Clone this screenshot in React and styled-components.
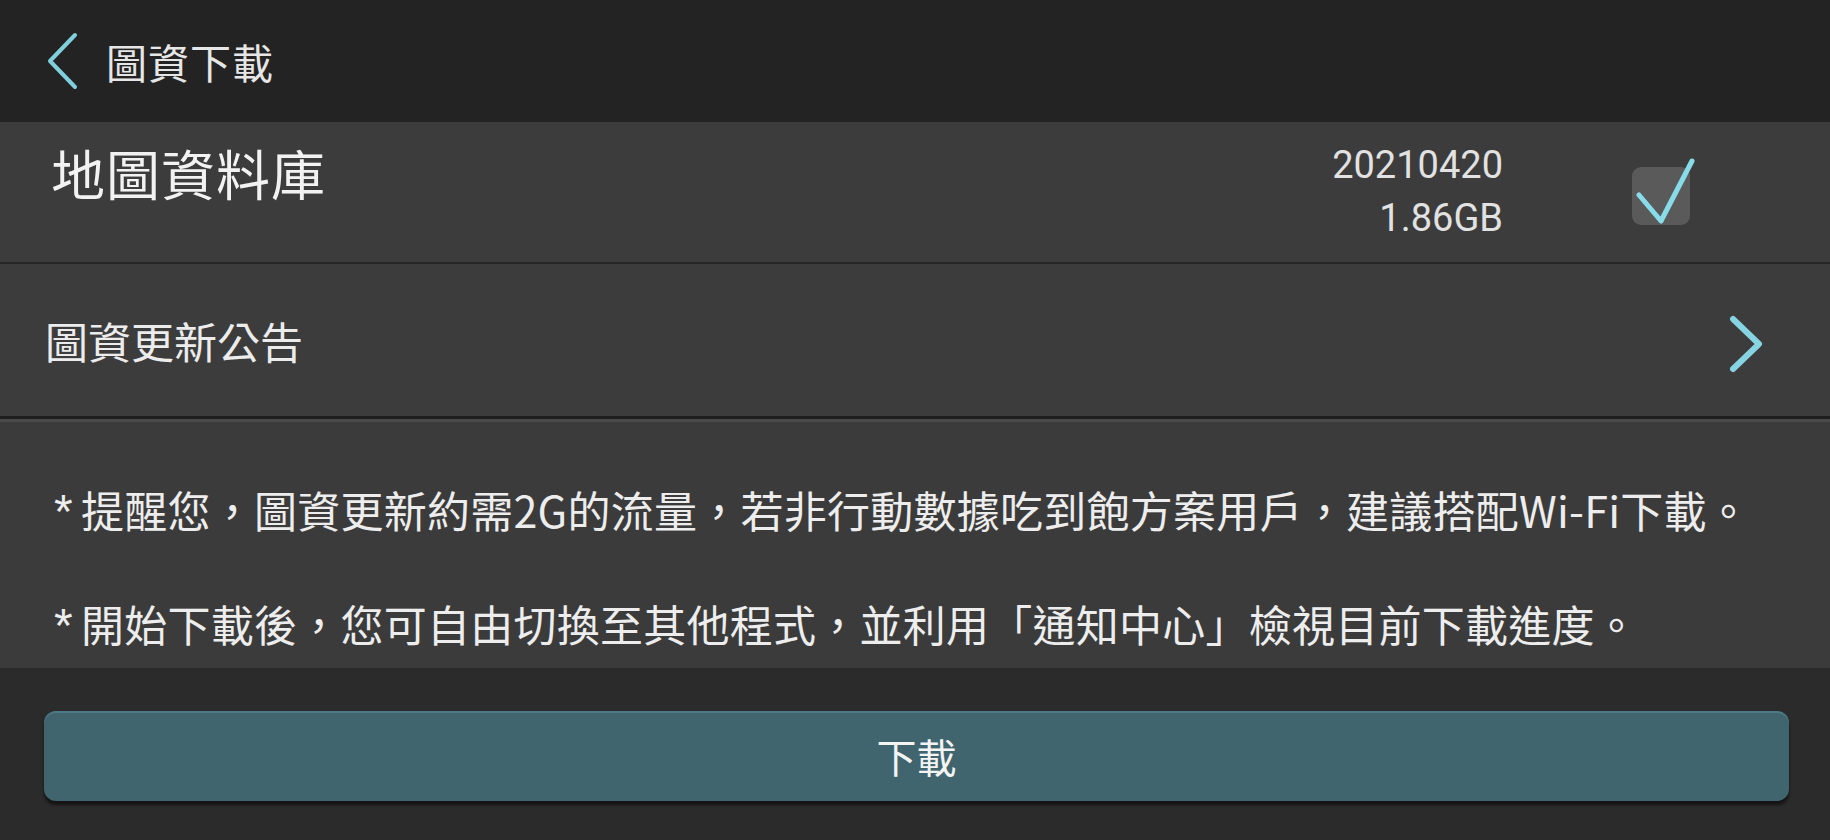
import React from 'react'
import styled, { createGlobalStyle } from 'styled-components'

const GlobalStyle = createGlobalStyle`
  html, body {
    margin: 0;
    padding: 0;
    background: #2b2b2b;
  }
  body {
    font-family: "Noto Sans CJK TC", "Noto Sans", sans-serif;
    color: #ececec;
  }
`

const Screen = styled.div`
  width: 1830px;
  height: 840px;
  display: flex;
  flex-direction: column;
  background: #2b2b2b;
  overflow: hidden;
`

const TopBar = styled.header`
  height: 122px;
  flex: none;
  display: flex;
  align-items: center;
  gap: 26px;
  padding-left: 46px;
  background: #232323;
  box-sizing: border-box;
`

const BackButton = styled.button`
  border: none;
  background: none;
  padding: 0;
  display: flex;
  cursor: pointer;
`

const TopTitle = styled.h1`
  margin: 0;
  font-size: 41px;
  font-weight: 400;
  color: #e6e6e6;
  letter-spacing: 1px;
`

const Row = styled.div`
  height: ${p => p.$height}px;
  flex: none;
  display: flex;
  align-items: center;
  padding: 0 ${p => p.$right || 66}px 0 ${p => p.$left || 47}px;
  background: #3c3c3c;
  box-sizing: border-box;
  border-bottom: ${p => p.$divider || '2px solid #262626'};
`

const DbTitle = styled.div`
  flex: 1;
  font-size: 54px;
  line-height: 60px;
  margin-bottom: 38px;
  color: #f2f2f2;
  letter-spacing: 1px;
`

const Meta = styled.div`
  display: flex;
  flex-direction: column;
  align-items: flex-end;
  font-family: Roboto, "Noto Sans", sans-serif;
  font-size: 38px;
  line-height: 53px;
  color: #e2e2e2;
  margin-right: 129px;
`

const CheckBox = styled.div`
  position: relative;
  width: 58px;
  height: 58px;
  margin-top: 8px;
  border-radius: 9px;
  background: #5a5a5a;
`

const CheckMark = styled.svg`
  position: absolute;
  left: 4px;
  top: -12px;
`

const NoticeLink = styled.div`
  flex: 1;
  font-size: 43px;
  color: #ececec;
`

const Notice = styled.section`
  height: 249px;
  flex: none;
  display: flex;
  flex-direction: column;
  justify-content: center;
  gap: 51px;
  padding: 44px 0 0 54px;
  box-sizing: border-box;
  background: #3b3b3b;
  border-top: 3px solid #4a4a4a;
`

const NoticeLine = styled.p`
  margin: 0;
  font-size: 43px;
  line-height: 60px;
  letter-spacing: 0.25px;
  color: #ededed;
  white-space: nowrap;
`

const Star = styled.span`
  font-family: "Liberation Sans", sans-serif;
  font-size: 48px;
  margin-right: 8px;
`

const Footer = styled.div`
  flex: 1;
  padding: 43px 41px 0 44px;
  background: #2b2b2b;
`

const DownloadButton = styled.button`
  width: 100%;
  height: 90px;
  border: none;
  border-radius: 12px;
  background: #40656e;
  box-shadow: 0 4px 3px rgba(0, 0, 0, 0.55), inset 0 2px 0 rgba(90, 140, 160, 0.5);
  color: #f4f4f4;
  font-family: "Noto Sans CJK TC", sans-serif;
  font-size: 40px;
  cursor: pointer;
`

const notes = [
  '提醒您，圖資更新約需2G的流量，若非行動數據吃到飽方案用戶，建議搭配Wi-Fi下載。',
  '開始下載後，您可自由切換至其他程式，並利用「通知中心」檢視目前下載進度。',
]

export default function App() {
  return (
    <Screen>
      <GlobalStyle />
      <TopBar>
        <BackButton aria-label="back">
          <svg width="34" height="58" viewBox="0 0 34 58">
            <polyline points="29,3 4,29 29,55" fill="none" stroke="#7fcfdc" strokeWidth="4" strokeLinecap="round" strokeLinejoin="round" />
          </svg>
        </BackButton>
        <TopTitle>圖資下載</TopTitle>
      </TopBar>

      <Row $height={142} $left={51}>
        <DbTitle>地圖資料庫</DbTitle>
        <Meta>
          <span>20210420</span>
          <span>1.86GB</span>
        </Meta>
        <CheckBox>
          <CheckMark width="60" height="70" viewBox="0 0 60 70">
            <polyline points="3,40 25,66 56,6" fill="none" stroke="#88dbe8" strokeWidth="5" strokeLinecap="round" strokeLinejoin="round" />
          </CheckMark>
        </CheckBox>
        <div style={{ width: 74 }} />
      </Row>

      <Row $height={155} $right={66} $left={45} $divider="3px solid #1e1e1e">
        <NoticeLink>圖資更新公告</NoticeLink>
        <svg width="36" height="58" viewBox="0 0 36 58" style={{ marginTop: 8 }}>
          <polyline points="5,4 31,29 5,54" fill="none" stroke="#86d4e2" strokeWidth="6" strokeLinecap="round" strokeLinejoin="round" />
        </svg>
      </Row>

      <Notice>
        {notes.map(text => (
          <NoticeLine key={text}>
            <Star>*</Star>
            {text}
          </NoticeLine>
        ))}
      </Notice>

      <Footer>
        <DownloadButton>下載</DownloadButton>
      </Footer>
    </Screen>
  )
}
